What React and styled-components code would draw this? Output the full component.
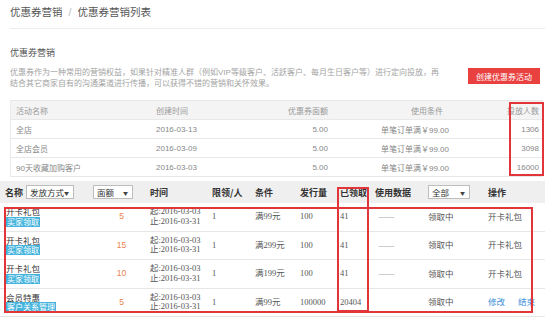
import React from "react";
import styled, { createGlobalStyle } from "styled-components";

const Global = createGlobalStyle`
  html, body { margin: 0; padding: 0; background: #fff; }
  body { font-family: "Liberation Sans", "Noto Sans CJK SC", sans-serif; color: #333; }
  * { box-sizing: border-box; }
`;

const RED = "#e2353a";

const Page = styled.div`
  width: 550px;
  height: 317px;
  overflow: hidden;
  background: #fff;
`;

const Breadcrumb = styled.div`
  margin: 0 5px 0 10px;
  height: 29px;
  padding-bottom: 5px;
  line-height: 24px;
  font-size: 10.5px;
  color: #555;
  border-bottom: 1px solid #ececec;
  white-space: nowrap;
`;

const Sep = styled.span`
  color: #bbb;
  margin: 0 6px;
`;

const Intro = styled.div`
  display: flex;
  align-items: flex-end;
  justify-content: space-between;
  margin-top: 18px;
  padding: 0 10px;
`;

const IntroText = styled.div``;

const Title = styled.div`
  font-size: 9px;
  line-height: 12px;
  color: #555;
`;

const Desc = styled.div`
  margin-top: 7.5px;
  font-size: 8px;
  line-height: 11px;
  color: #a3a3a3;
  white-space: nowrap;
`;

const CreateButton = styled.button`
  width: 72px;
  height: 16px;
  margin-bottom: 4.5px;
  border: none;
  background: #e8413f;
  color: #fff;
  font-family: "Noto Sans CJK SC", sans-serif;
  font-size: 8px;
  padding: 0;
  cursor: pointer;
`;

const Summary = styled.div`
  position: relative;
  margin: 11.5px 7px 0 10px;
  border-left: 1px solid #eaeaea;
  border-right: 1px solid #eaeaea;
`;

const SumRow = styled.div`
  display: grid;
  grid-template-columns: 140px 100px 80px 122px 1fr;
  height: ${(p) => (p.$head ? "20px" : "19px")};
  align-items: center;
  border-bottom: 1px solid #e8e8e8;
  border-top: ${(p) => (p.$head ? "1px solid #e8e8e8" : "none")};
  background: ${(p) => (p.$head ? "#f4f4f4" : "#fff")};
  font-size: 8px;
  color: ${(p) => (p.$head ? "#999" : "#888")};
  white-space: nowrap;
`;

const SumCell = styled.div`
  text-align: ${(p) => p.$align || "left"};
  padding-left: ${(p) => p.$pl || 0}px;
  padding-right: ${(p) => p.$pr || 0}px;
`;

const Highlight = styled.div`
  position: absolute;
  border: 2px solid ${RED};
  pointer-events: none;
`;

const Coupons = styled.div`
  position: relative;
  margin-top: 4px;
  width: 545px;
`;

const COLS = "93px 57px 62px 43px 45px 37px 32px 59px 60px 57px";

const HeadRow = styled.div`
  display: grid;
  grid-template-columns: ${COLS};
  height: 22px;
  align-items: center;
  background: #efefef;
  font-family: "Noto Sans CJK SC", sans-serif;
  font-size: 9px;
  font-weight: bold;
  color: #333;
  white-space: nowrap;
`;

const HeadCell = styled.div`
  display: flex;
  align-items: center;
  gap: 3px;
  padding-left: ${(p) => p.$pl || 0}px;
`;

const Select = styled.div`
  width: ${(p) => p.$w}px;
  height: 14px;
  display: flex;
  align-items: center;
  justify-content: space-between;
  padding: 0 4px 0 3px;
  background: #fff;
  border: 1px solid #bdbdbd;
  font-size: 8.5px;
  font-weight: normal;
  color: #333;
`;

const Caret = styled.span`
  font-size: 5px;
  color: #444;
`;

const Row = styled.div`
  display: grid;
  grid-template-columns: ${COLS};
  height: 28.5px;
  align-items: center;
  border-bottom: 1px solid #e6e6e6;
  background: #fff;
  font-family: "Liberation Serif", "Noto Sans CJK SC", serif;
  font-size: 8.5px;
  color: #555;
  white-space: nowrap;
`;

const Cell = styled.div`
  padding-left: ${(p) => p.$pl || 0}px;
  text-align: ${(p) => p.$align || "left"};
  line-height: 9.5px;
`;

const Name = styled.div`
  font-family: "Noto Sans CJK SC", sans-serif;
  color: #333;
  line-height: 10px;
`;

const Tag = styled.span`
  display: inline-block;
  margin-top: 0.5px;
  padding: 0 1px;
  height: 10px;
  line-height: 10px;
  background: #45b4dd;
  color: #fff;
  font-family: "Noto Sans CJK SC", sans-serif;
  font-size: 8px;
`;

const Amount = styled.span`
  color: #e9824f;
  font-family: "Liberation Sans", sans-serif;
  font-size: 8.5px;
`;

const Dash = styled.span`
  color: #c4c4c4;
  font-family: "Noto Sans CJK SC", sans-serif;
  font-size: 10px;
  letter-spacing: -1px;
`;

const Plain = styled.span`
  font-family: "Noto Sans CJK SC", sans-serif;
  color: #555;
`;

const Link = styled.a`
  font-family: "Noto Sans CJK SC", sans-serif;
  color: #3d8fd8;
  text-decoration: none;
  margin-right: 13px;
`;

const summary = [
  { name: "全店", date: "2016-03-13", amt: "5.00", cond: "单笔订单满￥99.00", n: "1306" },
  { name: "全店会员", date: "2016-03-09", amt: "5.00", cond: "单笔订单满￥99.00", n: "3098" },
  { name: "90天收藏加购客户", date: "2016-03-03", amt: "5.00", cond: "单笔订单满￥99.00", n: "16000" },
];

const coupons = [
  { name: "开卡礼包", tag: "买家领取", amt: "5", cond: "满99元", issued: "100", got: "41", dash: true },
  { name: "开卡礼包", tag: "买家领取", amt: "15", cond: "满299元", issued: "100", got: "41", dash: true },
  { name: "开卡礼包", tag: "买家领取", amt: "10", cond: "满199元", issued: "100", got: "41", dash: true },
  { name: "会员特惠", tag: "客户关系管理", amt: "5", cond: "满99元", issued: "100000", got: "20404", dash: false, links: true },
];

export default function App() {
  return (
    <Page>
      <Global />
      <Breadcrumb>
        优惠券营销<Sep>/</Sep>优惠券营销列表
      </Breadcrumb>
      <Intro>
        <IntroText>
          <Title>优惠券营销</Title>
          <Desc>
            优惠券作为一种常用的营销权益，如果针对精准人群（例如VIP等级客户、活跃客户、每月生日客户等）进行定向投放，再
            <br />
            结合其它商家自有的沟通渠道进行传播，可以获得不错的营销和关怀效果。
          </Desc>
        </IntroText>
        <CreateButton>创建优惠券活动</CreateButton>
      </Intro>

      <Summary>
        <SumRow $head>
          <SumCell $pl={5}>活动名称</SumCell>
          <SumCell $pl={5}>创建时间</SumCell>
          <SumCell $align="right" $pr={3}>优惠券面额</SumCell>
          <SumCell $align="right" $pr={10}>使用条件</SumCell>
          <SumCell $align="right" $pr={3}>投放人数</SumCell>
        </SumRow>
        {summary.map((r) => (
          <SumRow key={r.name}>
            <SumCell $pl={5}>{r.name}</SumCell>
            <SumCell $pl={5}>{r.date}</SumCell>
            <SumCell $align="right" $pr={3}>{r.amt}</SumCell>
            <SumCell $align="right" $pr={4}>{r.cond}</SumCell>
            <SumCell $align="right" $pr={3}>{r.n}</SumCell>
          </SumRow>
        ))}
        <Highlight style={{ left: 498, top: 2, width: 35, height: 74 }} />
      </Summary>

      <Coupons>
        <HeadRow>
          <HeadCell $pl={5}>
            名称
            <Select $w={48}>
              发放方式<Caret>▼</Caret>
            </Select>
          </HeadCell>
          <HeadCell>
            <Select $w={40}>
              面额<Caret>▼</Caret>
            </Select>
          </HeadCell>
          <HeadCell>时间</HeadCell>
          <HeadCell>限领/人</HeadCell>
          <HeadCell>条件</HeadCell>
          <HeadCell>发行量</HeadCell>
          <HeadCell $pl={3}>已领取</HeadCell>
          <HeadCell $pl={6}>使用数据</HeadCell>
          <HeadCell>
            <Select $w={42}>
              全部<Caret>▼</Caret>
            </Select>
          </HeadCell>
          <HeadCell>操作</HeadCell>
        </HeadRow>
        {coupons.map((c, i) => (
          <Row key={i}>
            <Cell $pl={6}>
              <Name>{c.name}</Name>
              <Tag>{c.tag}</Tag>
            </Cell>
            <Cell $align="center">
              <Amount>{c.amt}</Amount>
            </Cell>
            <Cell>
              <div>起:2016-03-03</div>
              <div>止:2016-03-31</div>
            </Cell>
            <Cell>1</Cell>
            <Cell>{c.cond}</Cell>
            <Cell>{c.issued}</Cell>
            <Cell $pl={3}>{c.got}</Cell>
            <Cell $pl={9}>{c.dash ? <Dash>——</Dash> : null}</Cell>
            <Cell>
              <Plain>领取中</Plain>
            </Cell>
            <Cell>
              {c.links ? (
                <>
                  <Link>修改</Link>
                  <Link>结束</Link>
                </>
              ) : (
                <Plain>开卡礼包</Plain>
              )}
            </Cell>
          </Row>
        ))}
        <Highlight style={{ left: 4, top: 26, width: 529, height: 106 }} />
        <Highlight style={{ left: 337, top: 6, width: 32, height: 125 }} />
      </Coupons>
    </Page>
  );
}
